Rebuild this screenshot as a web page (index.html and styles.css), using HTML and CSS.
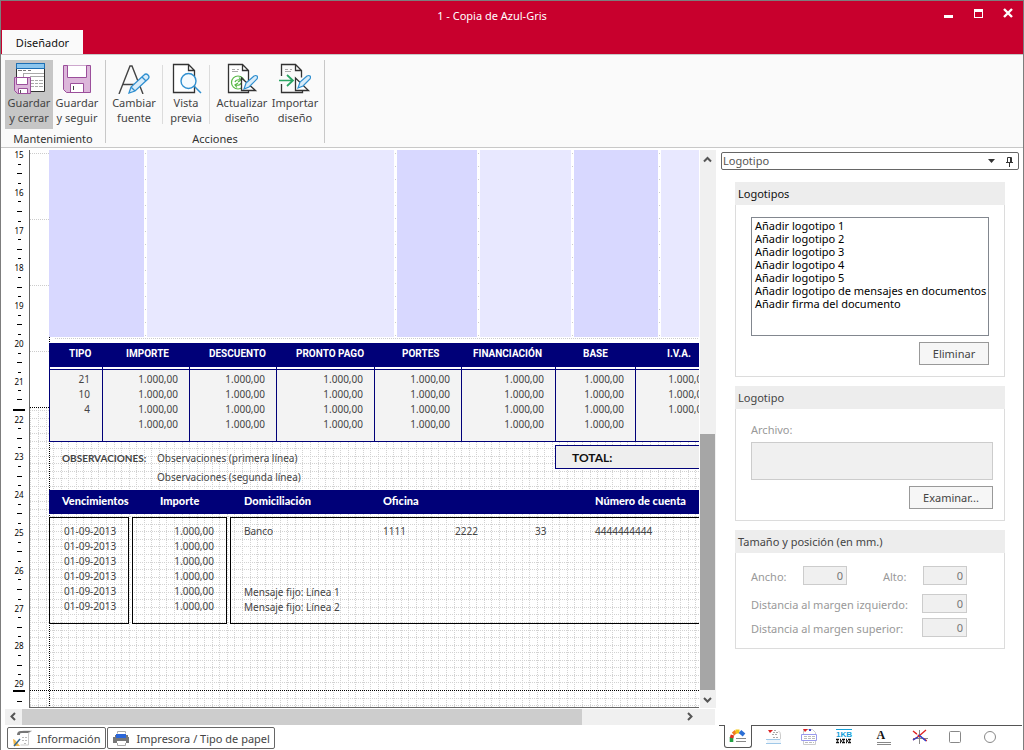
FILE: index.html
```html
<!DOCTYPE html>
<html lang="es">
<head>
<meta charset="utf-8">
<title>1 - Copia de Azul-Gris</title>
<link rel="stylesheet" href="styles.css">
</head>
<body>
<div class="window">
  <header class="titlebar">
    <h1 class="title">1 - Copia de Azul-Gris</h1>
    <div class="window-buttons">
      <button aria-label="Minimizar"><svg width="12" height="12"><path d="M1 8h9v3h-9z" fill="#fff"/></svg></button>
      <button aria-label="Maximizar"><svg width="12" height="12"><path d="M1 2h9v9h-9z M2 5v5h7v-5z" fill="#fff" fill-rule="evenodd"/></svg></button>
      <button aria-label="Cerrar"><svg width="12" height="12"><path d="M1 2l8 8M9 2l-8 8" stroke="#fff" stroke-width="2.400"/></svg></button>
    </div>
    <button class="ribbon-tab">Diseñador</button>
  </header>

  <nav class="ribbon">
    <section class="ribbon-group">
      <div class="ribbon-items">
        <button class="tool tool-save pressed">
          <svg width="32" height="32" fill="none"><path d="M3.500 1.500h28v28h-28z" fill="#fff" stroke="#333"/><path d="M3.500 1.500h28v5h-28z" fill="#8cc6ee" stroke="#1c6fb5"/><path d="M5 8.500h4m1 0h3m2 0h3" stroke="#777"/><path d="M11 11.500h20M10.500 11v4M17 14.500h14M18 18.500h3m1 0h3m1 0h4M18 21.500h3m1 0h3m1 0h4M18 24.500h3m1 0h3m1 0h4" stroke="#aaa"/><path d="M1.500 15.500h16v16h-13l-3-3z" fill="#dcb6da" stroke="#9b4f9b"/><path d="M3.500 16v6.500h11v-6.500M5.500 31v-4.500h9v4.500" fill="#fff" stroke="#9b4f9b"/><path d="M7.500 28v3" stroke="#555"/></svg>
          <span>Guardar<br>y cerrar</span></button>
        <button class="tool tool-save">
          <svg width="32" height="32" fill="none"><path d="M2.500 3.500h27v27h-24l-3-3z" fill="#dcb6da" stroke="#9b4f9b"/><path d="M6.500 3.500v12h19v-12M9.500 30v-8.500h13v8.500" fill="#fff" stroke="#9b4f9b"/><path d="M12.500 24v4" stroke="#444"/></svg>
          <span>Guardar<br>y seguir</span></button>
      </div>
      <h2>Mantenimiento</h2>
    </section>
    <section class="ribbon-group">
      <div class="ribbon-items">
        <button class="tool tool-font">
          <svg width="32" height="32" fill="none"><path d="M1 32l11-28h2l11 28M5 22.500h14" stroke="#444" stroke-width="1.400"/><path d="M11 31l2-6 13-12q2-2 4 0t0 4l-13 12zM13 25l4 4M24 15l4 4" fill="#d9ecf9" stroke="#2f8fd0" stroke-width="1.300"/></svg>
          <span>Cambiar<br>fuente</span></button>
        <i class="divider"></i>
        <button class="tool tool-view">
          <svg width="32" height="32" fill="none"><path d="M3.500 2.500h15l6 6v22h-21zM18.500 2.500v6h6" fill="#fff" stroke="#333" stroke-width="1.300"/><circle cx="18.500" cy="19" r="7.500" fill="#f4fafe" stroke="#2f8fd0" stroke-width="1.400"/><path d="M24 24l7 7" stroke="#2f8fd0" stroke-width="1.500"/></svg>
          <span>Vista<br>previa</span></button>
        <i class="divider"></i>
        <button class="tool tool-update">
          <svg width="32" height="32" fill="none"><path d="M2.500 2.500h14l6 6v22h-20zM16.500 2.500v6h6" fill="#fff" stroke="#333" stroke-width="1.300"/><path d="M6 7.500h3m2 0h2M6 9.500h6" stroke="#aaa"/><circle cx="12" cy="20.500" r="6.500" stroke="#58b947" stroke-width="1.200"/><path d="M9 20q1-3 6-2M13 15.500l2 2.500-3 2M15 21q-1 3-6 2M11 25.500l-2-2.500 3-2" stroke="#58b947" stroke-width="1.200"/><path d="M15.500 16v12.500h14z" fill="#fff" stroke="#333" stroke-width="1.300"/><path d="M18 27l2-6 8-7q2-1 3 0t0 3l-8 8z" fill="#d9ecf9" stroke="#2f8fd0" stroke-width="1.200"/></svg>
          <span>Actualizar<br>diseño</span></button>
        <button class="tool tool-import">
          <svg width="32" height="32" fill="none"><path d="M2.500 14v-11.500h14l6 6v7M16.500 2.500v6h6M2.500 22v8.500h21v-2" stroke="#333" stroke-width="1.300"/><path d="M6 7.500h3m2 0h2M6 9.500h6" stroke="#aaa"/><path d="M0 18.500h13M8 13l6 5.500-6 5.500" stroke="#2aa563" stroke-width="1.700"/><path d="M16.500 16v12.500h13z" fill="#fff" stroke="#333" stroke-width="1.300"/><path d="M19 26l2-6 7-6q2-1 3 0t0 3l-7 7z" fill="#d9ecf9" stroke="#2f8fd0" stroke-width="1.200"/></svg>
          <span>Importar<br>diseño</span></button>
      </div>
      <h2>Acciones</h2>
    </section>
  </nav>

  <main class="workspace">
    <div class="designer">
      <div class="sheet">
        <div class="ruler">
          <div class="cm"><b>15</b><i></i><i class="half"></i><i></i></div>
          <div class="cm"><b>16</b><i></i><i class="half"></i><i></i></div>
          <div class="cm"><b>17</b><i></i><i class="half"></i><i></i></div>
          <div class="cm"><b>18</b><i></i><i class="half"></i><i></i></div>
          <div class="cm"><b>19</b><i></i><i class="half"></i><i></i></div>
          <div class="cm"><b>20</b><i></i><i class="half"></i><i></i></div>
          <div class="cm"><b>21</b><i></i><i class="half"></i><i class="mark"></i></div>
          <div class="cm"><b>22</b><i></i><i class="half"></i><i></i></div>
          <div class="cm"><b>23</b><i></i><i class="half"></i><i></i></div>
          <div class="cm"><b>24</b><i></i><i class="half"></i><i></i></div>
          <div class="cm"><b>25</b><i></i><i class="half"></i><i></i></div>
          <div class="cm"><b>26</b><i></i><i class="half"></i><i></i></div>
          <div class="cm"><b>27</b><i></i><i class="half"></i><i></i></div>
          <div class="cm"><b>28</b><i></i><i class="half"></i><i></i></div>
          <div class="cm"><b>29</b><i class="mark"></i><i class="half"></i></div>
        </div>
        <div class="paper">
          <svg class="paper-grid" width="100%" height="100%">
            <defs>
              <pattern id="mm" x="8" y="64" width="68" height="68" patternUnits="userSpaceOnUse">
                <path d="M0 .5h68M0 8.500h68M0 15.500h68M0 23.500h68M0 30.500h68M0 38.500h68M0 45.500h68M0 53.500h68M0 60.500h68M.5 0v68M8.500 0v68M15.500 0v68M23.500 0v68M30.500 0v68M38.500 0v68M45.500 0v68M53.500 0v68M60.500 0v68" stroke="#d2d2d2" stroke-dasharray="1 1"/>
              </pattern>
              <pattern id="rows" y="3" width="2" height="66" patternUnits="userSpaceOnUse"><path d="M0 0h1v1h-1z" fill="#ccc"/></pattern>
            </defs>
            <rect width="19" height="257" fill="url(#rows)"/>
            <rect y="257" width="100%" height="100%" fill="url(#mm)"/>
            <path d="M25 188.500H700" stroke="#ccc" stroke-dasharray="1 1"/>
            <path d="M115.500 3V187M365.500 3V187M448.500 3V187M542.500 3V187M629.500 3V187" stroke="#ccc" stroke-dasharray="1 12"/>
            <path d="M19.500 187V560M0 257.500H19M0 540.500H700" stroke="#000" stroke-dasharray="1 1"/>
          </svg>
          <div class="page">
            <div class="stripes"><i></i><i></i><i></i><i></i><i></i><i></i></div>
            <table class="taxes">
              <colgroup><col class="c-53"><col class="c-87"><col class="c-87"><col class="c-98"><col class="c-87"><col class="c-94"><col class="c-80"><col class="c-84"></colgroup>
              <thead><tr><th class="in-20">TIPO</th><th class="in-24">IMPORTE</th><th class="in-20">DESCUENTO</th><th class="in-20">PRONTO PAGO</th><th class="in-28">PORTES</th><th class="in-12">FINANCIACIÓN</th><th class="in-28">BASE</th><th class="in-32">I.V.A.</th></tr></thead>
              <tbody>
                <tr><td>21</td><td>1.000,00</td><td>1.000,00</td><td>1.000,00</td><td>1.000,00</td><td>1.000,00</td><td>1.000,00</td><td>1.000,00</td></tr>
                <tr><td>10</td><td>1.000,00</td><td>1.000,00</td><td>1.000,00</td><td>1.000,00</td><td>1.000,00</td><td>1.000,00</td><td>1.000,00</td></tr>
                <tr><td>4</td><td>1.000,00</td><td>1.000,00</td><td>1.000,00</td><td>1.000,00</td><td>1.000,00</td><td>1.000,00</td><td>1.000,00</td></tr>
                <tr><td></td><td>1.000,00</td><td>1.000,00</td><td>1.000,00</td><td>1.000,00</td><td>1.000,00</td><td>1.000,00</td><td></td></tr>
              </tbody>
            </table>
            <div class="notes">
              <strong>OBSERVACIONES:</strong>
              <p>Observaciones (primera línea)<br>Observaciones (segunda línea)</p>
              <div class="total">TOTAL:</div>
            </div>
            <div class="due-head"><b>Vencimientos</b><b>Importe</b><b>Domiciliación</b><b>Oficina</b><b>Número de cuenta</b></div>
            <div class="due-body">
              <div class="box dates">01-09-2013<br>01-09-2013<br>01-09-2013<br>01-09-2013<br>01-09-2013<br>01-09-2013</div>
              <div class="box amounts">1.000,00<br>1.000,00<br>1.000,00<br>1.000,00<br>1.000,00<br>1.000,00</div>
              <div class="box bank">
                <div class="account"><span>Banco</span><span>1111</span><span>2222</span><span>33</span><span>4444444444</span></div>
                <p>Mensaje fijo: Línea 1<br>Mensaje fijo: Línea 2</p>
              </div>
            </div>
          </div>
        </div>
        <div class="vscroll">
          <svg width="16" height="18" fill="none"><path d="M4 11.500l3.500-3.500 3.500 3.500" stroke="#555" stroke-width="2"/></svg>
          <div class="vtrack"><i></i></div>
          <svg width="16" height="18" fill="none"><path d="M4 8l3.500 3.500L11 8" stroke="#555" stroke-width="2"/></svg>
        </div>
      </div>
      <div class="hscroll">
        <svg width="17" height="16" fill="none"><path d="M10 4l-3.500 3.500L10 11" stroke="#555" stroke-width="2"/></svg>
        <div class="htrack"><i></i></div>
        <svg width="17" height="16" fill="none"><path d="M7 4l3.500 3.500L7 11" stroke="#555" stroke-width="2"/></svg>
      </div>
      <div class="sheet-tabs">
        <button><svg width="20" height="18" fill="none"><path d="M7.500 5q0-3 3-3h8q-3 1-3 3v11h-8" fill="#fff" stroke="#ccc"/><path d="M4 6q0-4 4-4h10l-3 2h-8v2z" fill="#777"/><path d="M9 8.500h5M9 11.500h5M11 14.500h3" stroke="#bbb" stroke-dasharray="2 1"/><path d="M0 10l2 1 5 6h-6z" fill="#f0b84a"/><path d="M1 17l6-7" stroke="#346a94" stroke-width="1.500"/></svg>Información</button>
        <button><svg width="20" height="18" fill="none"><path d="M4.500 4.500v-2h8v2M4.500 13v3.500h8v-3" stroke="#aaa"/><path d="M2 6h13v2h-13zM0 8h16v6h-3v-2h-9v2h-4z" fill="#777"/><path d="M3 5h10v4h-10z" fill="#2a66d8"/><path d="M4 12h9v2h-9z" fill="#fff"/></svg>Impresora / Tipo de papel</button>
      </div>
    </div>

    <aside class="panel">
      <div class="panel-combo">
        <select aria-label="Panel"><option>Logotipo</option></select>
        <svg width="9" height="6"><path d="M1 1h7l-3.500 4z" fill="#333"/></svg>
        <button aria-label="Fijar panel"><svg width="9" height="11" fill="none"><path d="M2.500 6v-4.500h4v4.500M1 6.500h7M4.500 7v4M5.500 2v4" stroke="#333"/></svg></button>
      </div>

      <section class="group">
        <h3 class="strong">Logotipos</h3>
        <div class="group-body list-body">
          <ul class="listbox">
            <li>Añadir logotipo 1</li><li>Añadir logotipo 2</li><li>Añadir logotipo 3</li><li>Añadir logotipo 4</li><li>Añadir logotipo 5</li><li>Añadir logotipo de mensajes en documentos</li><li>Añadir firma del documento</li>
          </ul>
          <button class="btn">Eliminar</button>
        </div>
      </section>

      <section class="group">
        <h3>Logotipo</h3>
        <div class="group-body file-body">
          <label for="file">Archivo:</label>
          <textarea id="file" disabled></textarea>
          <button class="btn wide">Examinar...</button>
        </div>
      </section>

      <section class="group">
        <h3>Tamaño y posición (en mm.)</h3>
        <div class="group-body size-body">
          <div class="field-row first"><label for="w">Ancho:</label><input id="w" value="0" disabled><label for="h">Alto:</label><input id="h" value="0" disabled></div>
          <div class="field-row"><label for="ml">Distancia al margen izquierdo:</label><input id="ml" value="0" disabled></div>
          <div class="field-row"><label for="mt">Distancia al margen superior:</label><input id="mt" value="0" disabled></div>
        </div>
      </section>

      <div class="panel-tabs">
        <button class="active" aria-label="Logotipo"><svg width="18" height="16" fill="none"><path d="M2.500 14v-5" stroke="#22a043" stroke-width="3.600"/><path d="M2.500 10l1-3" stroke="#e03020" stroke-width="3.600"/><path d="M4 6l3-2.500" stroke="#f07a20" stroke-width="3.600"/><path d="M6.500 3.500h4" stroke="#f3c614" stroke-width="4"/><path d="M11 3.500l4 3.500" stroke="#2b6fd6" stroke-width="4"/><path d="M7 10.500h10M7 13.500h10" stroke="#888"/></svg></button>
        <button aria-label="Cabecera"><svg width="18" height="18" fill="none"><path d="M3 2h5l-3 3z" fill="#d22"/><path d="M9 2.500h3M8 4.500h2m1 0h3M7 6.500h6M8 9.500h6" stroke="#aaa" stroke-dasharray="2 1"/><path d="M13.500 3q2 1 2 4v4" stroke="#ccc"/><path d="M2 11h14v4h-14z" fill="#eef5fb"/><path d="M1 11.500h14M1 15.500h15" stroke="#9fc8e8"/></svg></button>
        <button aria-label="Cuerpo"><svg width="18" height="18" fill="none"><path d="M3.500 1.500h9l3 3v12h-12z" fill="#fff" stroke="#ccc"/><path d="M3 1h5l-3 3z" fill="#d22"/><path d="M9 1h2v2h-2z" fill="#44c"/><path d="M1.500 6.500h15v6h-15z" fill="#fff" stroke="#9a9aee"/><path d="M4 8.500h11M4 10.500h11M5 14.500h9" stroke="#bbb" stroke-dasharray="3 1"/></svg></button>
        <button aria-label="Texto 1KB"><svg width="18" height="18" fill="none"><path d="M1 1.500h16" stroke="#14a0d8"/><text x="1" y="9" class="kb">1KB</text><path d="M1 11.500h16M1 14.500h16" stroke="#111" stroke-width="1.500" stroke-dasharray="3 1 1 1"/><path d="M2 13h15" stroke="#111" stroke-width="1.500" stroke-dasharray="1 2 2 1"/></svg></button>
        <button class="text-tool" aria-label="Texto"><span>A</span></button>
        <button aria-label="Líneas"><svg width="18" height="18" fill="none"><path d="M8.500 2v14M2 10.500h15" stroke="#888"/><path d="M2 3l5 4 9 6" stroke="#d22" stroke-width="1.300" stroke-dasharray="5 1"/><path d="M15 2l-7 6-6 4" stroke="#e02020" stroke-width="1.300"/><path d="M8 7l7 6M2 12l5-3" stroke="#2244d8" stroke-width="1.300"/></svg></button>
        <button aria-label="Rectángulo"><svg width="18" height="18" fill="none"><rect x="3.500" y="3.500" width="11" height="11" rx="1" stroke="#888"/></svg></button>
        <button aria-label="Elipse"><svg width="18" height="18" fill="none"><circle cx="9" cy="9" r="5.500" stroke="#888"/></svg></button>
      </div>
    </aside>
  </main>
</div>
</body>
</html>
```
FILE: styles.css
```css
* { box-sizing: border-box; }
body { margin: 0; background: #fff; color: #444; font: 11px/15px "Noto Sans", "Open Sans", sans-serif; }
h1, h2, h3, p, ul { margin: 0; padding: 0; font-weight: 400; font-size: inherit; }
button, input, select, textarea { font: inherit; color: inherit; margin: 0; }
button { padding: 0; border: 0; background: none; border-radius: 0; }
svg { display: block; flex: none; }

.window { display: flex; flex-direction: column; min-height: 100vh; border: 1px solid #7d7d7d; border-bottom: 0; }

/* Title bar */
.titlebar { display: grid; grid-template-columns: 1fr auto; grid-template-rows: 29px 24px; background: #c8002d; }
.title { grid-column: 1 / 3; grid-row: 1; align-self: center; padding-right: 40px; text-align: center; color: #fff; }
.window-buttons { grid-column: 2; grid-row: 1; display: flex; gap: 18px; padding: 5px 8px 0 0; }
.window-buttons button { height: 14px; }
.ribbon-tab { grid-column: 1; grid-row: 2; justify-self: start; width: 81px; margin-left: 1px; background: #fafafa; color: #111; }

/* Ribbon */
.ribbon { display: flex; padding: 5px 0 4px 4px; background: #fafafa; border-top: 1px solid #c8c8c8; border-bottom: 1px solid #c8c8c8; }
.ribbon-group { display: flex; flex-direction: column; border-right: 1px solid #c8c8c8; padding-right: 4px; }
.ribbon-group + .ribbon-group { padding-right: 6px; }
.ribbon-group h2 { margin-bottom: -3px; padding-top: 2px; text-align: center; color: #333; }
.ribbon-group + .ribbon-group h2 { padding-left: 6px; }
.ribbon-items { display: flex; }
.tool { display: flex; flex-direction: column; align-items: center; height: 69px; padding-top: 2px; gap: 1px; }
.tool.pressed { background: #c6c6c6; }
.tool-save { width: 48px; }
.tool-font { width: 56px; }
.tool-view { width: 46px; }
.tool-update { width: 60px; margin-left: 2px; }
.tool-import { width: 46px; }
.divider { width: 1px; margin: 5px 0; background: #dcdcdc; }

/* Workspace */
.workspace { flex: 1; display: flex; }
.designer { flex: 1; min-width: 0; display: flex; flex-direction: column; }
.sheet { display: flex; flex: 1; margin-top: 2px; }
.ruler { width: 28px; display: grid; grid-auto-rows: 1fr; height: 567px; margin-bottom: -10px; color: #000; }
.cm { display: flex; flex-direction: column; align-items: center; justify-content: space-between; padding-left: 8px; }
.cm:last-child { justify-content: flex-start; gap: 5px; }
.cm:last-child .mark { margin-top: -3px; }
.cm b { height: 9px; font: 8px/9px "Noto Sans", sans-serif; }
.cm i { width: 3px; height: 1px; margin-bottom: 4px; background: #000; }
.cm .half { width: 5px; }
.cm .mark { width: 12px; height: 2px; }
.paper { position: relative; flex: 1; min-width: 0; overflow: hidden; border-left: 1px solid #666; border-bottom: 1px solid #666; }
.paper-grid { position: absolute; inset: 0; }
.page { position: relative; width: 720px; padding-left: 19px; font: 10px/15px "Noto Sans", "Open Sans", sans-serif; }

.stripes { display: grid; grid-template-columns: 95px 247px 80px 92px 84px 87px; column-gap: 3px; height: 187px; margin-bottom: 6px; }
.stripes { grid-template-columns: 95px 247px 80px 91px 84px 88px; }
.stripes i { background: #e8e8ff; }
.stripes i:nth-child(odd) { background: #d8d8ff; }

.taxes { table-layout: fixed; width: 670px; border-collapse: separate; border-spacing: 0; }
.c-53 { width: 53px; } .c-80 { width: 80px; } .c-84 { width: 84px; } .c-87 { width: 87px; } .c-94 { width: 94px; } .c-98 { width: 98px; }
.taxes th { height: 24px; padding: 0 0 4px; background: #000078; color: #fff; text-align: left; white-space: nowrap; font: bold 10px/15px Roboto, sans-serif; }
.taxes .in-12 { padding-left: 12px; } .taxes .in-20 { padding-left: 20px; } .taxes .in-24 { padding-left: 24px; } .taxes .in-28 { padding-left: 28px; } .taxes .in-32 { padding-left: 32px; }
.taxes td { height: 15px; padding: 0 11px 0 0; text-align: right; background: #f3f3f3; border-left: 1px solid #000078; }
.taxes td:first-child { padding-right: 12px; }
.taxes tbody tr:first-child td { height: 20px; padding-top: 5px; background: linear-gradient(#fff 2px, #000078 2px 3px, #f3f3f3 3px); }
.taxes tbody tr:last-child td { height: 25px; padding-bottom: 9px; border-bottom: 1px solid #000078; }

.notes { display: grid; grid-template-columns: 95px 398px 1fr; height: 48px; padding: 3px 0 0 13px; }
.notes strong { padding-top: 6px; font: bold 10px/15px Lato, sans-serif; white-space: nowrap; }
.notes p { padding-top: 4px; line-height: 19px; }
.total { height: 24px; padding-left: 16px; border: 1px solid #000078; background: #eee; color: #111; font: bold 12px/23px Lato, sans-serif; }

.due-head { display: grid; grid-template-columns: 98px 84px 139px 212px 1fr; height: 24px; padding-left: 13px; background: #000078; color: #fff; font: bold 11px/21px Lato, sans-serif; }
.due-body { display: grid; grid-template-columns: 80px 95px 1fr; column-gap: 3px; margin-top: 3px; }
.box { height: 107px; padding: 6px 0 0 14px; border: 1px solid #000; }
.amounts { padding: 6px 12px 0 0; text-align: right; }
.bank { padding-left: 13px; }
.account { display: grid; grid-template-columns: 139px 72px 80px 60px 1fr; margin-bottom: 46px; }

/* Scroll bars */
.vscroll { width: 17px; display: flex; flex-direction: column; background: #f0f0f0; border-left: 1px solid #fff; }
.vtrack { flex: 1; display: flex; flex-direction: column; justify-content: flex-end; }
.vtrack i { width: 15px; height: 49%; background: #a6a6a6; }
.hscroll { display: flex; height: 16px; margin: 1px 1px 0 4px; background: #f0f0f0; }
.hscroll svg:last-child { margin-right: 17px; }
.htrack { flex: 1; display: flex; }
.htrack i { width: 85%; background: #cdcdcd; }

.sheet-tabs { display: flex; gap: 1px; padding: 2px 0 1px 6px; }
.sheet-tabs button { display: flex; align-items: center; gap: 4px; height: 22px; padding: 0 4px 0 5px; border: 1px solid #666; border-radius: 2px; }

/* Side panel */
.panel { width: 307px; display: flex; flex-direction: column; padding: 4px 1px 2px 3px; }
.panel-combo { display: flex; align-items: center; height: 18px; margin: 0 3px 12px 2px; padding-right: 4px; border: 1px solid #666; border-radius: 2px; }
.panel-combo select { flex: 1; height: 16px; padding: 0 1px; border: 0; appearance: none; background: none; color: #555; line-height: 16px; }
.panel-combo button { margin-left: 9px; }
.group { margin: 0 17px 9px 16px; }
.group h3 { height: 23px; padding-left: 3px; background: #ededed; line-height: 24px; }
.group .strong { color: #111; }
.group-body { display: flex; flex-direction: column; border: 1px solid #dcdcdc; border-top: 0; }
.group-body label { color: #999; }
.list-body { padding: 12px 15px 11px; }
.listbox { height: 119px; padding: 1px 0 0 3px; border: 1px solid #82878f; color: #000; list-style: none; line-height: 13px; white-space: nowrap; overflow: hidden; }
.btn { align-self: flex-end; width: 70px; height: 23px; margin-top: 6px; border: 1px solid #999; background: #f6f6f6; }
.btn.wide { width: 84px; }
.file-body { padding: 13px 11px 11px 15px; }
textarea { height: 38px; margin-top: 5px; border: 1px solid #ccc; background: #f0f0f0; resize: none; }
.size-body { gap: 5px; padding: 13px 37px 11px 15px; }
.field-row { display: flex; justify-content: space-between; align-items: center; }
.field-row label { padding-top: 2px; }
.field-row.first { display: grid; grid-template-columns: 52px 80px 40px 44px; justify-content: stretch; padding-bottom: 4px; }
.field-row input { width: 45px; height: 19px; padding: 0 3px; border: 1px solid #ccc; border-radius: 0; background: #f0f0f0; color: #777; text-align: right; }
.field-row.first input { width: 44px; }

.panel-tabs { display: flex; margin-top: auto; padding-left: 5px; border-top: 1px solid #555; }
.panel-tabs button { display: flex; align-items: center; justify-content: center; width: 35px; height: 22px; }
.panel-tabs .active { width: 28px; margin: -1px 4px 0 0; height: 23px; border: 1px solid #555; border-top: 0; border-radius: 0 0 3px 3px; background: #fff; }
.panel-tabs .text-tool { margin: 0 1px 0 5px; }
.text-tool span { width: 14px; height: 15px; border-bottom: 3px double #888; color: #111; font: bold 12px/11px "Liberation Serif", serif; text-align: left; }
.kb { fill: #14a0d8; font: bold 8px "Liberation Sans", sans-serif; }
```
